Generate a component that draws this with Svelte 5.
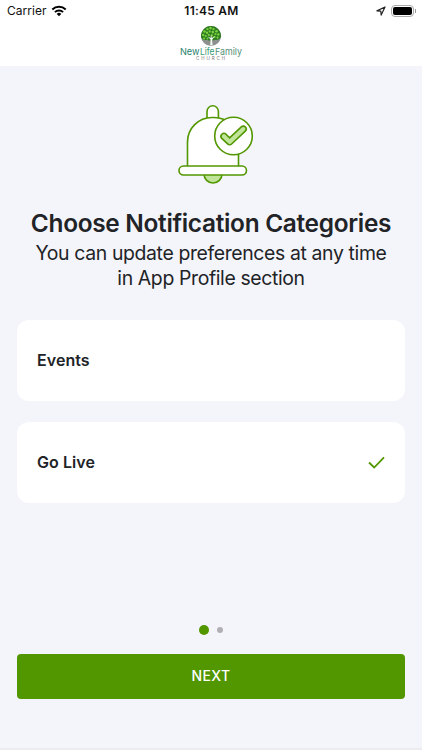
<script>
  let categories = $state([
    { name: 'Events', selected: false },
    { name: 'Go Live', selected: true }
  ]);
  let step = $state(0);

  // leaf clusters of the logo tree: x, y, radius
  const leaves = [
    [24, 7, 1.3], [27, 4.6, 1.2], [30, 3.6, 1.3], [33, 4.6, 1.2], [36, 6.8, 1.3],
    [26.5, 8.3, 1.2], [29.2, 6.9, 1.1], [32.3, 7.6, 1.3], [35, 9.5, 1.1], [37.8, 10, 1.2],
    [22.8, 10.5, 1.2], [25.3, 11.6, 1.1], [28.3, 10.4, 1.1], [31.4, 10.8, 1.1],
    [34, 12.4, 1.1], [37, 13.1, 1.1], [23.6, 14, 1.1], [27, 14, .9]
  ];

  function toggle(category) {
    category.selected = !category.selected;
  }
</script>

<div class="screen">
  <header>
    <div class="status">
      <div class="carrier">
        <span>Carrier</span>
        <svg width="16" height="12" viewBox="0 0 16 12">
          <path d="M1.3 4.5a9.6 9.6 0 0 1 13.4 0" />
          <path d="M3.9 7.1a5.9 5.9 0 0 1 8.2 0" />
          <path class="tip" d="M8 11.2 5.7 8.9a3.3 3.3 0 0 1 4.6 0z" />
        </svg>
      </div>
      <span class="time">11:45 AM</span>
      <div class="indicators">
        <svg width="10" height="10" viewBox="0 0 10 10">
          <path d="M.9 4.9 9 1 5.2 9.1 4.8 5.2z" />
        </svg>
        <div class="battery"><i></i></div>
      </div>
    </div>
    <svg class="logo" width="64" height="37" viewBox="0 0 64 37">
      <circle cx="32" cy="12" r="10" fill="#8c918d" />
      <g transform="translate(1.5 .5)">
        <path d="M20.6 13A10 10 0 1 1 40.4 13q-2 3-6 2.3-4 1.7-8 0-4 1-5.8-2.3z" fill="#2e7b20" />
        {#each leaves as [x, y, r]}
          <circle cx={x} cy={y} {r} fill="#7bd23d" />
        {/each}
        <path d="M29.6 20.8q.7-3 .3-6l-3-3 3.2 1.6.4-4 .8 4 3.1-2-2.6 3.6q-.4 3 .4 5.8z" fill="#f4f7f2" />
      </g>
      <g class="wordmark">
        <text x="1" y="31" textLength="19.5" lengthAdjust="spacingAndGlyphs" fill="#26816a">New</text>
        <text x="21" y="31" textLength="14.5" lengthAdjust="spacingAndGlyphs" fill="#369a70">Life</text>
        <text x="36" y="31" textLength="27" lengthAdjust="spacingAndGlyphs" fill="#568f78">Family</text>
      </g>
      <text class="church" x="17" y="36" textLength="29">CHURCH</text>
    </svg>
  </header>

  <main>
    <svg class="bell" width="80" height="82" viewBox="0 0 80 82">
      <path class="accent" d="M27 70h18a9 9 0 0 1-18 0z" />
      <path d="M30 20V7.5a5.7 5.7 0 0 1 11.4 0V20z" />
      <path d="M10.5 63V38a24.500 24.500 0 0 1 24.500-24.500h2A24.500 24.500 0 0 1 61.500 38v25z" />
      <rect x="2" y="62" width="67.500" height="9" rx="4.500" />
      <circle cx="56.500" cy="32" r="18.800" />
      <path class="accent" d="M44.800 34.400a2.900 2.900 0 0 1 4.200-4.100l3.600 3.600 11.700-11a2.900 2.900 0 0 1 4 4.200L54.600 40a2.800 2.800 0 0 1-4-.1z" />
    </svg>

    <h1>Choose Notification Categories</h1>
    <p>You can update preferences at any time<br />in App Profile section</p>

    <div class="categories">
      {#each categories as category}
        <button class="card" onclick={() => toggle(category)}>
          <span>{category.name}</span>
          {#if category.selected}
            <svg width="17" height="13" viewBox="0 0 17 13">
              <path d="M1 6.500 6.200 11.500 16 1.300" />
            </svg>
          {/if}
        </button>
      {/each}
    </div>

    <div class="dots">
      <i class:active={step === 0}></i>
      <i class:active={step === 1}></i>
    </div>
    <button class="next" onclick={() => (step = 1)}>NEXT</button>
  </main>
</div>

<style>
  :global(body) {
    margin: 0;
  }

  .screen {
    display: flex;
    flex-direction: column;
    box-sizing: border-box;
    width: 422px;
    height: 750px;
    overflow: hidden;
    background: #f4f5fa;
    border-bottom: 2px solid #ececf0;
    color: #212327;
    font-family: Inter, sans-serif;
  }

  header {
    height: 66px;
    flex: none;
    background: #fff;
  }

  .status {
    display: grid;
    grid-template-columns: 1fr auto 1fr;
    align-items: center;
    height: 21px;
    padding: 0 6px 0 7px;
    font-size: 12px;
    color: #111;
  }

  .carrier {
    display: flex;
    align-items: center;
    gap: 4px;
    letter-spacing: .05px;
  }
  .carrier path {
    fill: none;
    stroke: #000;
    stroke-width: 2;
  }
  .carrier .tip {
    fill: #000;
    stroke: none;
  }

  .time {
    font-weight: 600;
    letter-spacing: .25px;
  }

  .indicators {
    display: flex;
    justify-content: flex-end;
    align-items: center;
    gap: 5px;
  }
  .indicators path {
    fill: none;
    stroke: #222;
    stroke-width: 1.200;
    stroke-linejoin: round;
  }

  .battery {
    display: flex;
    align-items: center;
    box-sizing: border-box;
    width: 23px;
    height: 12px;
    padding: 1px;
    border: 1px solid #aaa;
    border-radius: 4px;
    margin-right: 2px;
  }
  .battery i {
    flex: none;
    width: 19px;
    height: 8px;
    border-radius: 2px;
    background: #000;
  }
  .battery::after {
    content: '';
    flex: none;
    width: 1px;
    height: 4px;
    margin-left: 3px;
    background: #999;
  }

  .logo {
    display: block;
    margin: 3px auto 0;
  }
  .wordmark {
    font-size: 9.500px;
    font-weight: 400;
  }
  .church {
    font-size: 4.500px;
    fill: #777;
  }

  main {
    flex: 1;
    display: flex;
    flex-direction: column;
    align-items: center;
    padding: 38px 17px 0;
  }

  .bell {
    flex: none;
    margin-left: 11px;
    fill: #fff;
    stroke: #529600;
    stroke-width: 1.600;
  }
  .bell .accent {
    fill: #c0e59a;
  }

  h1 {
    margin: 20px 0 0;
    font-size: 24.400px;
    line-height: 34px;
    font-weight: 600;
    letter-spacing: -.3px;
    white-space: nowrap;
  }

  p {
    margin: 1px 0 0;
    font-size: 19.400px;
    line-height: 24.500px;
    letter-spacing: -.36px;
    text-align: center;
    white-space: nowrap;
  }

  .categories {
    display: flex;
    flex-direction: column;
    gap: 21px;
    width: 100%;
    margin-top: 30px;
  }

  button {
    border: 0;
    font-family: inherit;
    cursor: pointer;
  }

  .card {
    display: flex;
    justify-content: space-between;
    align-items: center;
    height: 81px;
    padding: 0 20px 1px;
    border-radius: 12px;
    background: #fff;
    color: inherit;
    font-size: 16px;
    font-weight: 600;
    letter-spacing: .05px;
  }
  .card path {
    fill: none;
    stroke: #529600;
    stroke-width: 1.800;
  }

  .dots {
    display: flex;
    align-items: center;
    gap: 8px;
    height: 10px;
    margin-top: 122px;
  }
  .dots i {
    width: 6px;
    height: 6px;
    border-radius: 50%;
    background: #b0b0b4;
  }
  .dots i.active {
    width: 10px;
    height: 10px;
    background: #529600;
  }

  .next {
    width: 100%;
    height: 45px;
    margin-top: 19px;
    padding-bottom: 3px;
    border-radius: 4px;
    background: #529600;
    color: #fff;
    font-size: 14px;
    font-weight: 500;
    letter-spacing: .4px;
  }
</style>
